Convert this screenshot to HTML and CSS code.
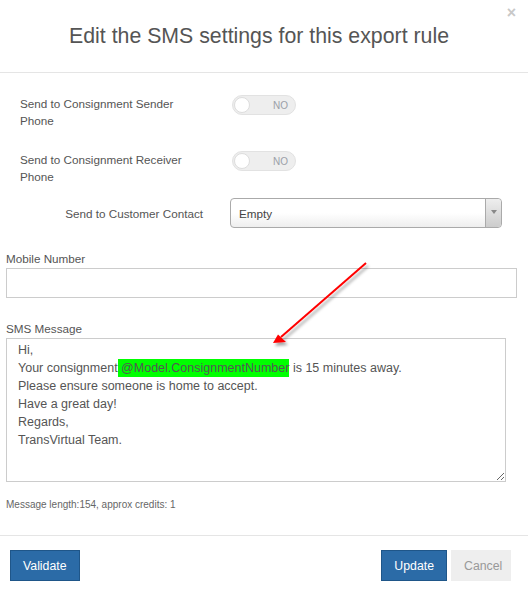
FILE: index.html
```html
<!DOCTYPE html>
<html lang="en">
<head>
    <meta charset="UTF-8">
    <meta name="viewport" content="width=device-width, initial-scale=1.0">
    <title>SMS settings</title>
    <link rel="stylesheet" href="styles.css">
</head>
<body>

    <div class="modal">
        <div class="modal-header">
            <span class="close">&times;</span>
            <h4 class="modal-title">Edit the SMS settings for this export rule</h4>
        </div>

        <div class="modal-body">
            <!-- Switches -->
            <div class="switch-row">
                <label class="row-label">Send to Consignment Sender Phone</label>
                <span class="switch"><span class="knob"></span><span class="switch-text">NO</span></span>
            </div>
            <div class="switch-row second">
                <label class="row-label">Send to Consignment Receiver Phone</label>
                <span class="switch"><span class="knob"></span><span class="switch-text">NO</span></span>
            </div>

            <!-- Customer contact select -->
            <div class="select-row">
                <label class="row-label right">Send to Customer Contact</label>
                <div class="select">
                    <span class="select-value">Empty</span>
                    <span class="select-arrow"><b></b></span>
                </div>
            </div>

            <div class="field">
                <label for="mobile">Mobile Number</label>
                <input type="text" id="mobile" class="text-input">
            </div>

            <div class="field">
                <label>SMS Message</label>
                <div class="message-box">Hi,
Your consignment<span class="highlight"> @Model.ConsignmentNumber</span> is 15 minutes away.
Please ensure someone is home to accept.
Have a great day!
Regards,
TransVirtual Team.</div>
            </div>

            <p class="message-info">Message length:154, approx credits: 1</p>
        </div>

        <div class="modal-footer">
            <button type="button" class="btn btn-primary">Validate</button>
            <div class="footer-right">
                <button type="button" class="btn btn-primary">Update</button>
                <button type="button" class="btn btn-default">Cancel</button>
            </div>
        </div>

        <!-- red annotation arrow -->
        <svg class="annotation" width="528" height="590" viewBox="0 0 528 590">
            <defs>
                <filter id="shadow" x="-20%" y="-20%" width="140%" height="140%">
                    <feDropShadow dx="2" dy="3" stdDeviation="1.5" flood-color="#000" flood-opacity="0.35"/>
                </filter>
            </defs>
            <g filter="url(#shadow)">
                <line x1="366" y1="263" x2="281" y2="337" stroke="#ff0000" stroke-width="2"/>
                <polygon points="273,343 278,334.5 286,342" fill="#ff0000"/>
            </g>
        </svg>
    </div>

</body>
</html>
```

FILE: styles.css
```css
/* Styling for the SMS settings dialog */
body {
    margin: 0;
    padding: 0;
    font-family: "Liberation Sans", Arial, sans-serif;
    background: #fff;
    color: #555;
}

.modal {
    position: relative;
    width: 528px;
    height: 590px;
    overflow: hidden;
    background-color: #fff;
}

.modal-header {
    position: relative;
    height: 73px;
    box-sizing: border-box;
    padding: 1px 10px 0 0;
    display: flex;
    align-items: center;
    justify-content: center;
    border-bottom: 1px solid #e5e5e5;
}

.modal-title {
    margin: 0;
    font-size: 21.3px;
    font-weight: normal;
    color: #555;
}

.close {
    position: absolute;
    top: 4px;
    right: 12px;
    font-size: 16px;
    font-weight: bold;
    color: #c8c8c8;
}

.modal-body {
    padding: 22px 11px 23px 6px;
}

/* label + control rows */
.switch-row,
.select-row {
    display: flex;
    padding-left: 14px;
}

.switch-row {
    align-items: flex-start;
}

.switch-row.second {
    margin-top: 22px;
}

.select-row {
    align-items: center;
    margin-top: 13px;
}

.row-label {
    width: 185px;
    flex-shrink: 0;
    font-size: 11.7px;
    line-height: 17px;
    color: #555;
}

.row-label.right {
    text-align: right;
    padding-right: 2px;
    box-sizing: border-box;
}

.switch {
    margin-left: 27px;
    width: 64px;
    height: 20px;
    box-sizing: border-box;
    border: 1px solid #e2e2e2;
    border-radius: 10px;
    background-color: #eee;
    display: flex;
    align-items: center;
    justify-content: space-between;
    padding: 0 7px 0 1px;
}

.knob {
    width: 14px;
    height: 14px;
    border-radius: 50%;
    background-color: #fff;
    border: 1px solid #ddd;
}

.switch-text {
    font-size: 10px;
    color: #9aa0a8;
}

.select {
    margin-left: 25px;
    width: 272px;
    height: 30px;
    box-sizing: border-box;
    border: 1px solid #aaa;
    border-radius: 4px;
    background: linear-gradient(to bottom, #fff 0%, #fff 50%, #eee 100%);
    display: flex;
    align-items: center;
    justify-content: space-between;
}

.select-value {
    padding-left: 8px;
    font-size: 11.7px;
    color: #444;
}

.select-arrow {
    width: 15px;
    height: 100%;
    border-left: 1px solid #aaa;
    border-radius: 0 4px 4px 0;
    background: linear-gradient(to bottom, #eee 0%, #ccc 100%);
    display: flex;
    align-items: center;
    justify-content: center;
}

.select-arrow b {
    width: 0;
    height: 0;
    border-left: 3px solid transparent;
    border-right: 3px solid transparent;
    border-top: 4px solid #888;
    margin-top: -2px;
}

/* stacked fields */
.field {
    margin-top: 22px;
}

.field label {
    display: block;
    font-size: 11.7px;
    line-height: 17px;
    margin-bottom: 1px;
    color: #555;
}

.text-input {
    display: block;
    width: 511px;
    height: 30px;
    box-sizing: border-box;
    margin: 0;
    border: 1px solid #ccc;
    outline: none;
}

.message-box {
    width: 500px;
    height: 144px;
    box-sizing: border-box;
    border: 1px solid #ccc;
    padding: 2px 11px;
    font-size: 12.5px;
    line-height: 18px;
    color: #555;
    white-space: pre-wrap;
    overflow: auto;
    resize: vertical;
}

.highlight {
    background-color: #00ff00;
    padding: 2px 0;
}

.message-info {
    margin: 16px 0 0 0;
    font-size: 10px;
    line-height: 14px;
    color: #666;
}

/* footer buttons */
.modal-footer {
    border-top: 1px solid #e5e5e5;
    padding: 14px 17px 9px 10px;
    display: flex;
    justify-content: space-between;
}

.footer-right {
    display: flex;
    gap: 4px;
}

.btn {
    height: 31px;
    padding: 0 12px;
    font-family: "Liberation Sans", Arial, sans-serif;
    font-size: 12.3px;
    border-radius: 0;
    cursor: pointer;
}

.btn-primary {
    background-color: #2b6ba7;
    border: 1px solid #1f5689;
    color: #fff;
}

.btn-default {
    width: 60px;
    background-color: #eee;
    border: 1px solid #eee;
    color: #999;
}

.annotation {
    position: absolute;
    left: 0;
    top: 0;
    pointer-events: none;
}
```
